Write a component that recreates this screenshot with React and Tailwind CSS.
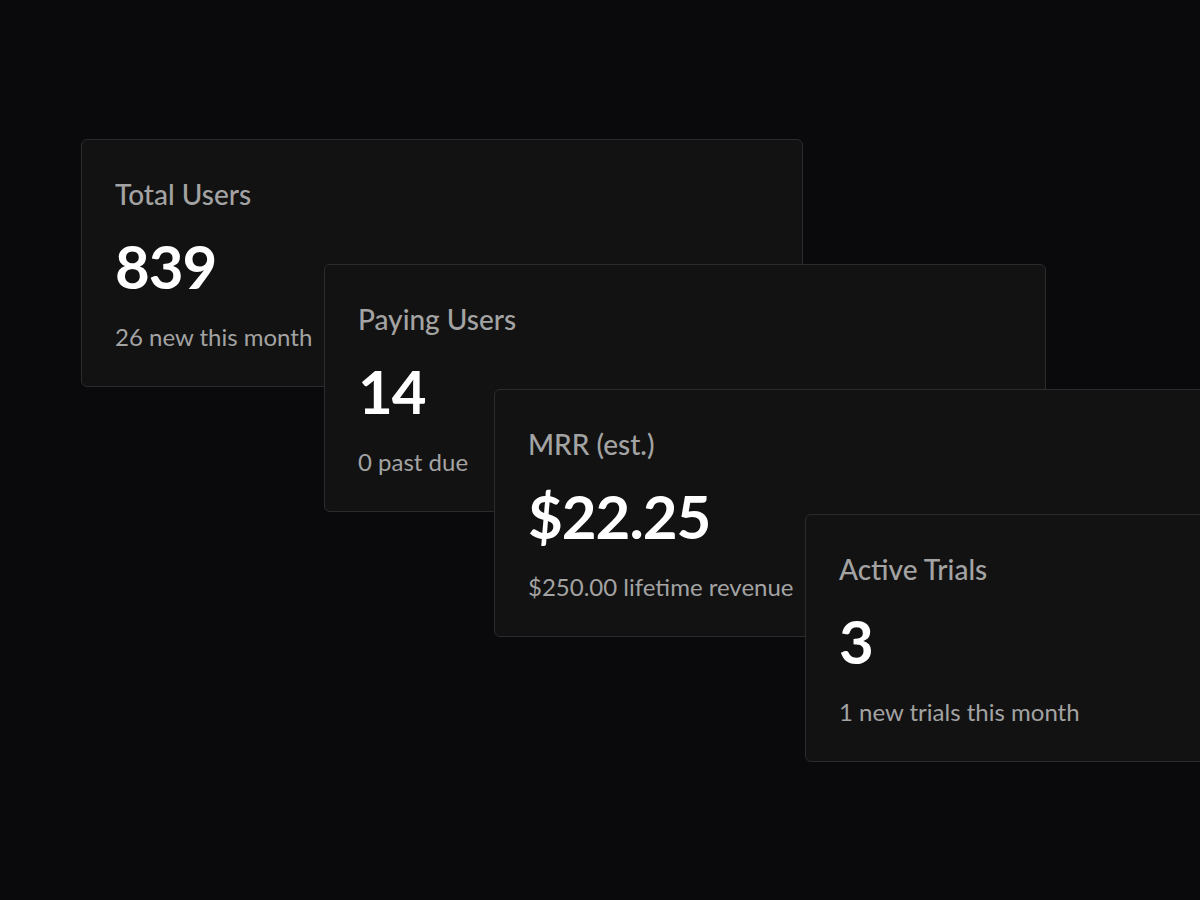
const stats = [
  { label: 'Total Users', value: '839', note: '26 new this month', offset: 'ml-[81px]' },
  { label: 'Paying Users', value: '14', note: '0 past due', offset: 'ml-[324px]' },
  { label: 'MRR (est.)', value: '$22.25', note: '$250.00 lifetime revenue', offset: 'ml-[494px]' },
  { label: 'Active Trials', value: '3', note: '1 new trials this month', offset: 'ml-[805px]' },
];

function StatCard({ label, value, note, offset, first }) {
  return (
    <div
      className={`${offset} ${first ? '' : '-mt-[123px]'} w-[722px] h-[248px] shrink-0 rounded-md border border-[#2b2b2d] bg-[#121212] px-[33px] pt-[36px]`}
    >
      <h3 className="text-[28px] leading-[36px] font-medium text-[#a3a3a3]">{label}</h3>
      <p className="mt-[23px] text-[60px] leading-[62px] font-bold text-white tracking-[-1px]">{value}</p>
      <p className="mt-[25px] text-[24px] leading-[30px] text-[#a3a3a3]">{note}</p>
    </div>
  );
}

export default function App() {
  return (
    <div
      className="w-[1200px] h-[900px] overflow-hidden bg-[#0a0a0c] pt-[139px] flex flex-col"
      style={{ fontFamily: 'Lato, "Noto Sans", sans-serif' }}
    >
      {stats.map((s, i) => (
        <StatCard key={s.label} {...s} first={i === 0} />
      ))}
    </div>
  );
}
